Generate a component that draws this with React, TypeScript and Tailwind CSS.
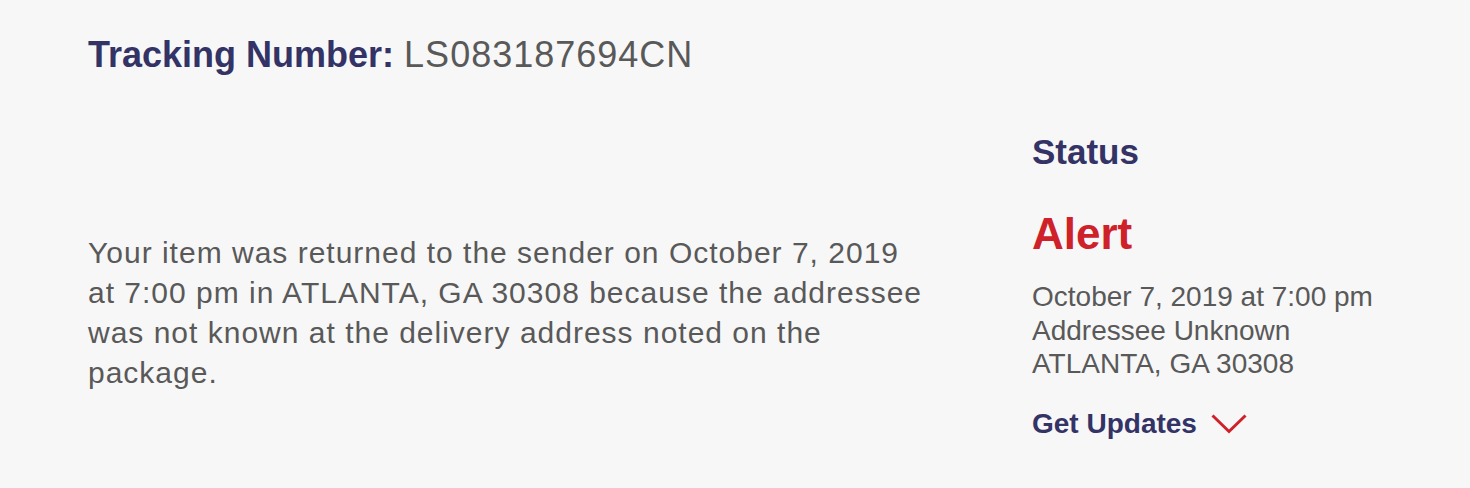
export default function App() {
  return (
    <div
      className="w-[1470px] h-[488px] bg-[#f7f7f7] pl-[88px] pt-[33px]"
      style={{ fontFamily: '"Liberation Sans", Arial, sans-serif' }}
    >
      <h1 className="text-[36px] leading-[44px] text-[#595959]">
        <span className="font-bold text-[#333366]">Tracking Number:</span>{" "}
        <span className="tracking-[1px]">LS083187694CN</span>
      </h1>
      <div className="flex items-start mt-[55px]">
        <p className="mt-[101px] w-[842px] text-[30px] leading-[40px] tracking-[1px] text-[#595959]">
          Your item was returned to the sender on October 7, 2019 at 7:00 pm in ATLANTA, GA 30308 because the
          addressee was not known at the delivery address noted on the package.
        </p>
        <div className="ml-[102px] flex flex-col">
          <h2 className="text-[35px] leading-[40px] font-bold text-[#333366]">Status</h2>
          <h3 className="mt-[35.5px] text-[44px] leading-[52px] font-bold text-[#cf2129]">Alert</h3>
          <div className="mt-[20.5px] text-[28px] leading-[33.5px] text-[#595959]">
            <p>October 7, 2019 at 7:00 pm</p>
            <p>Addressee Unknown</p>
            <p>ATLANTA, GA 30308</p>
          </div>
          <a className="mt-[27px] flex items-center gap-[14px] text-[28px] leading-[32px] font-bold text-[#333366]">
            Get Updates
            <svg width="36" height="20" viewBox="0 0 36 20" fill="none">
              <path d="M1.5 1.5 L18 17.5 L34.5 1.5" stroke="#cf2129" strokeWidth="3" />
            </svg>
          </a>
        </div>
      </div>
    </div>
  );
}
